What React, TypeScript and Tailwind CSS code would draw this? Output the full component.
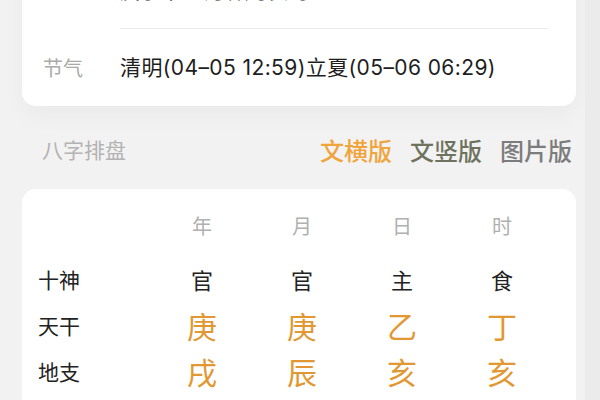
import React from 'react';

const FONT = "font-['Noto_Sans_CJK_SC','Noto_Sans',sans-serif]";

const pillars = [
  { head: '年', god: '官', stem: '庚', branch: '戌' },
  { head: '月', god: '官', stem: '庚', branch: '辰' },
  { head: '日', god: '主', stem: '乙', branch: '亥' },
  { head: '时', god: '食', stem: '丁', branch: '亥' },
];

function Row({
  label,
  cells,
  cellClass,
  className = '',
}: {
  label: string;
  cells: string[];
  cellClass: string;
  className?: string;
}) {
  return (
    <div className={`grid grid-cols-[114px_100px_100px_100px_100px] h-[46px] items-center shrink-0 ${className}`}>
      <span className="text-[21px] text-[#222222] leading-none">{label}</span>
      {cells.map((c, i) => (
        <span key={i} className={`text-center leading-none ${cellClass}`}>
          {c}
        </span>
      ))}
    </div>
  );
}

export default function App() {
  return (
    <div className={`w-[600px] h-[400px] overflow-hidden bg-[#f2f2f2] flex ${FONT}`}>
      <div className="w-[585px] flex flex-col">
        {/* info card, scrolled partly out of view */}
        <div className="ml-[22px] w-[554px] -mt-[48px] shrink-0 bg-white rounded-[14px] shadow-[0_10px_24px_rgba(0,0,0,0.035)]">
          <div className="flex h-[76px] items-center">
            <span className="w-[98px]" />
            <span className="pt-[1px] text-[20px] text-[#222222]">庚子年 三月廿九 亥时</span>
          </div>
          <div className="ml-[98px] mr-[28px] h-px bg-[#ebebeb]" />
          <div className="flex h-[77px] items-center">
            <span className="w-[98px] pl-[21px] text-[20px] text-[#aaaaaa]">节气</span>
            <span className="text-[21px] text-[#1e1e1e] tracking-[0.4px] font-['Inter','Noto_Sans_CJK_SC',sans-serif]">
              清明(04–05 12:59)立夏(05–06 06:29)
            </span>
          </div>
        </div>

        {/* section header */}
        <div className="flex items-center justify-between h-[83px] shrink-0 pt-[4px] pl-[42px] pr-[13px]">
          <span className="text-[21px] text-[#b3b3b3]">八字排盘</span>
          <div className="flex items-center gap-[18px] text-[24px] font-medium">
            <span className="text-[#f0a43c]">文横版</span>
            <span className="text-[#6e725e]">文竖版</span>
            <span className="text-[#7c7c7c]">图片版</span>
          </div>
        </div>

        {/* pillars card */}
        <div className="ml-[22px] w-[554px] shrink-0 bg-white rounded-[14px] pt-[14px] pl-[16px] h-[240px]">
          <Row
            label=""
            cells={pillars.map((p) => p.head)}
            cellClass="text-[20px] text-[#b0b0b0]"
          />
          <Row
            label="十神"
            cells={pillars.map((p) => p.god)}
            cellClass="text-[22px] text-[#222222]"
            className="mt-[7px]"
          />
          <Row
            label="天干"
            cells={pillars.map((p) => p.stem)}
            cellClass="text-[30px] text-[#e29832]"
          />
          <Row
            label="地支"
            cells={pillars.map((p) => p.branch)}
            cellClass="text-[30px] text-[#e29832]"
          />
        </div>
      </div>
      <div className="flex-1 bg-[#ebebeb]" />
    </div>
  );
}
